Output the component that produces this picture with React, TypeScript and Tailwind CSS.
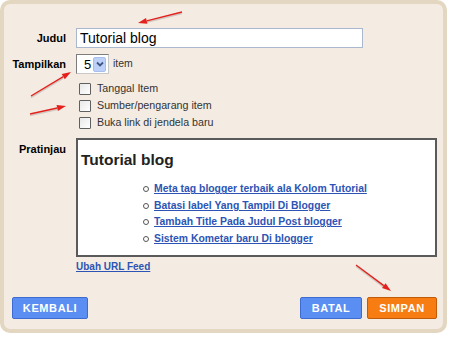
import React from 'react';

const links = [
  'Meta tag blogger terbaik ala Kolom Tutorial',
  'Batasi label Yang Tampil Di Blogger',
  'Tambah Title Pada Judul Post blogger',
  'Sistem Kometar baru Di blogger',
];

const options = ['Tanggal Item', 'Sumber/pengarang item', 'Buka link di jendela baru'];

// red annotation arrow, head at (x2, y2)
const Arrow = ({ x1, y1, x2, y2 }: { x1: number; y1: number; x2: number; y2: number }) => {
  const a = Math.atan2(y2 - y1, x2 - x1);
  const len = 9;
  const w = 3;
  const bx = x2 - len * Math.cos(a);
  const by = y2 - len * Math.sin(a);
  const px = -Math.sin(a) * w;
  const py = Math.cos(a) * w;
  const pts = `${x2},${y2} ${bx + px},${by + py} ${bx - px},${by - py}`;
  return (
    <g>
      <line x1={x1} y1={y1 + 1.5} x2={bx} y2={by + 1.5} stroke="#000" strokeOpacity="0.15" strokeWidth="1.5" />
      <line x1={x1} y1={y1} x2={bx} y2={by} stroke="#e3201c" strokeWidth="1.4" />
      <polygon points={pts} fill="#e3201c" />
    </g>
  );
};

const Label = ({ children, top }: { children: React.ReactNode; top?: boolean }) => (
  <div className={`text-right text-[11px] font-bold text-black ${top ? 'self-start pt-[3px]' : ''}`}>{children}</div>
);

export default function App() {
  return (
    <div className="relative w-[450px] h-[337px] bg-white font-['Liberation_Sans',Arial,sans-serif]">
      <div className="w-[447px] h-[333px] rounded-[10px] border-4 border-[#e3d7c1] bg-[#f4ece3] pt-[24px] pr-[6px] flex flex-col">
        <div className="grid grid-cols-[62px_1fr] gap-x-[10px] items-center">
          <Label>Judul</Label>
          <input
            readOnly
            value="Tutorial blog"
            className="w-[287px] h-[20px] border border-[#a9b8cf] bg-white px-[3px] text-[14px] text-black outline-none"
          />

          <div className="col-span-2 h-[6px]" />

          <Label>Tampilkan</Label>
          <div className="flex items-center gap-[4px]">
            <div className="flex items-center w-[33px] h-[20px] border border-[#7d7d7d] border-r-[#c8c8c8] border-b-[#c8c8c8] bg-white">
              <span className="w-[15px] pl-[7px] text-[13px] leading-none text-black">5</span>
              <span className="ml-auto mr-[2px] w-[13px] h-[15px] rounded-[2px] bg-[#bdd0f8] border border-[#a8bfee] flex items-center justify-center">
                <svg width="8" height="6" viewBox="0 0 8 6">
                  <path d="M1 1.5 L4 4.5 L7 1.5" fill="none" stroke="#3e5585" strokeWidth="1.8" />
                </svg>
              </span>
            </div>
            <span className="text-[10.5px] text-[#333]">item</span>
          </div>

          <div className="col-span-2 h-[6px]" />

          <div />
          <div className="flex flex-col">
            {options.map((o) => (
              <div key={o} className="h-[17px] flex items-center">
                <span className="ml-[3px] w-[12px] h-[12px] rounded-[1px] border border-[#5f5f5f] bg-gradient-to-br from-[#e8e8e8] to-white" />
                <span className="ml-[6px] text-[10.7px] text-[#333]">{o}</span>
              </div>
            ))}
          </div>

          <div className="col-span-2 h-[7px]" />

          <Label top>Pratinjau</Label>
          <div className="h-[119px] border-2 border-[#5a5a5a] bg-white pl-[3px] pt-[11px]">
            <div className="text-[15.5px] font-bold text-[#222] leading-[18px]">Tutorial blog</div>
            <ul className="mt-[12px] flex flex-col">
              {links.map((l) => (
                <li key={l} className="h-[16.5px] flex items-center">
                  <span className="ml-[62px] w-[6px] h-[6px] rounded-full border border-[#555]" />
                  <span className="ml-[5px] text-[10.4px] font-bold text-[#2d54b4] underline">{l}</span>
                </li>
              ))}
            </ul>
          </div>

          <div />
          <div className="pt-[4px] text-[10px] font-bold text-[#2d54b4] underline leading-[12px]">Ubah URL Feed</div>
        </div>

        <div className="mt-auto pb-[10px] pl-[8px] flex items-center">
          <button className="w-[76px] h-[22px] rounded-[2px] border border-[#3e6bd0] bg-[#5b8ef2] text-[11px] font-bold tracking-[0.6px] text-white">
            KEMBALI
          </button>
          <button className="ml-auto w-[62px] h-[22px] rounded-[2px] border border-[#3e6bd0] bg-[#5b8ef2] text-[11px] font-bold tracking-[0.6px] text-white">
            BATAL
          </button>
          <button className="ml-[5px] w-[70px] h-[22px] rounded-[2px] border border-[#c25a08] bg-[#f77d12] text-[11px] font-bold tracking-[0.6px] text-white">
            SIMPAN
          </button>
        </div>
      </div>

      <svg className="absolute inset-0 pointer-events-none" width="450" height="337">
        <Arrow x1={182} y1={12} x2={138} y2={23} />
        <Arrow x1={31} y1={96} x2={71} y2={72} />
        <Arrow x1={30} y1={114} x2={66} y2={106} />
        <Arrow x1={356} y1={265} x2={391} y2={291} />
      </svg>
    </div>
  );
}
